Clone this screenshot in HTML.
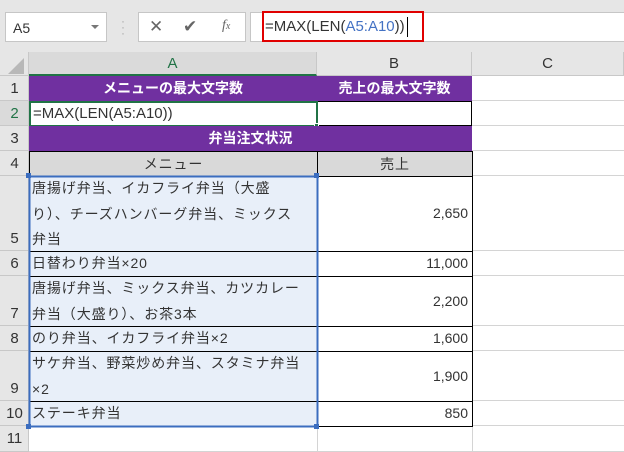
<!DOCTYPE html>
<html><head><meta charset="utf-8"><style>
*{margin:0;padding:0;box-sizing:border-box}
body{width:624px;height:452px;overflow:hidden;background:#e6e6e6;font-family:"Liberation Sans","Noto Sans CJK JP",sans-serif;position:relative;color:#222}
.a{position:absolute}
.box{background:#fff;border:1px solid #c6c6c6}
.ch{background:#e6e6e6;border-right:1px solid #c8c8c8;font-size:15px;text-align:center;line-height:24px;color:#333}
.rh{background:#e6e6e6;border-bottom:1px solid #c8c8c8;width:29px;left:0;text-align:center;font-size:15px;color:#333}
.c{font-size:14px;color:#333;overflow:hidden;white-space:nowrap}
.t{letter-spacing:0.9px}
.p{background:#7030a0;color:#fff;font-weight:bold;text-align:center;font-size:14px}
.hl{background:#dadada}
</style></head><body>
<div class="a box" style="left:5px;top:12px;width:102px;height:30px;font-size:14px;line-height:30px;padding-left:7px;color:#333">A5</div>
<div class="a" style="left:91px;top:25px;width:0;height:0;border-left:4px solid transparent;border-right:4px solid transparent;border-top:4px solid #777"></div>
<div class="a" style="left:121px;top:18px;color:#aaa;font-size:12px;line-height:6px">·<br>·<br>·</div>
<div class="a box" style="left:138px;top:12px;width:108px;height:30px;color:#666">
<span class="a" style="left:10px;top:4px;font-size:17px">✕</span>
<span class="a" style="left:44px;top:4px;font-size:17px">✔</span>
<span class="a" style="left:83px;top:5px;font-size:14px;font-style:italic;font-family:'Liberation Serif',serif">f<span style="font-size:10px">x</span></span>
</div>
<div class="a box" style="left:250px;top:12px;width:380px;height:30px"></div>
<div class="a" style="left:262px;top:11px;width:162px;height:31px;border:2px solid #e00000;font-size:15px;line-height:27px;padding-left:1px;color:#333">=MAX(LEN(<span style="color:#4472c4">A5:A10</span>))<span style="display:inline-block;width:1px;height:20px;background:#000;vertical-align:middle;margin-left:2px"></span></div>
<div class="a" style="left:29px;top:76px;width:595px;height:376px;background:#fff"></div>
<div class="a" style="left:0;top:52px;width:29px;height:24px;background:#e6e6e6;border-right:1px solid #c8c8c8;border-bottom:1px solid #c8c8c8"></div>
<div class="a" style="left:8px;top:58px;width:0;height:0;border-left:16px solid transparent;border-bottom:16px solid #b8b8b8"></div>
<div class="a ch hl" style="left:29px;top:52px;width:288px;height:24px;border-bottom:2px solid #217346;color:#217346">A</div>
<div class="a ch" style="left:317px;top:52px;width:155px;height:24px;border-bottom:1px solid #c8c8c8">B</div>
<div class="a ch" style="left:472px;top:52px;width:152px;height:24px;border-bottom:1px solid #c8c8c8">C</div>
<div class="a rh" style="top:76px;height:25px;line-height:25px">1</div>
<div class="a rh hl" style="top:101px;height:25px;line-height:25px;color:#217346">2</div>
<div class="a rh" style="top:126px;height:25px;line-height:25px">3</div>
<div class="a rh" style="top:151px;height:25px;line-height:25px">4</div>
<div class="a rh" style="top:176px;height:75px;line-height:25px;padding-top:50px">5</div>
<div class="a rh" style="top:251px;height:25px;line-height:25px">6</div>
<div class="a rh" style="top:276px;height:50px;line-height:25px;padding-top:25px">7</div>
<div class="a rh" style="top:326px;height:25px;line-height:25px">8</div>
<div class="a rh" style="top:351px;height:50px;line-height:25px;padding-top:25px">9</div>
<div class="a rh" style="top:401px;height:25px;line-height:25px">10</div>
<div class="a rh" style="top:426px;height:26px;line-height:25px">11</div>
<div class="a" style="left:28px;top:76px;width:1px;height:376px;background:#c8c8c8"></div>
<svg class="a" style="left:0;top:0" width="624" height="452">
<g stroke="#d4d4d4" stroke-width="1">
<line x1="472" y1="100.5" x2="624" y2="100.5"/><line x1="472" y1="125.5" x2="624" y2="125.5"/><line x1="472" y1="150.5" x2="624" y2="150.5"/><line x1="472" y1="175.5" x2="624" y2="175.5"/><line x1="472" y1="250.5" x2="624" y2="250.5"/><line x1="472" y1="275.5" x2="624" y2="275.5"/><line x1="472" y1="325.5" x2="624" y2="325.5"/><line x1="472" y1="350.5" x2="624" y2="350.5"/><line x1="472" y1="400.5" x2="624" y2="400.5"/><line x1="472" y1="425.5" x2="624" y2="425.5"/>
<line x1="29" y1="451.5" x2="624" y2="451.5"/>
<line x1="317.5" y1="426" x2="317.5" y2="452"/><line x1="472.5" y1="426" x2="472.5" y2="452"/>
</g></svg>
<div class="a p" style="left:29px;top:76px;width:288px;height:25px;line-height:25px">メニューの最大文字数</div>
<div class="a p" style="left:317px;top:76px;width:155px;height:25px;line-height:25px">売上の最大文字数</div>
<div class="a c" style="left:29px;top:101px;width:443px;height:25px;background:#fff;border:1px solid #000"></div>
<div class="a c" style="left:29px;top:101px;width:289px;height:26px;border:2px solid #217346;font-size:15px;line-height:21px;padding-left:2px">=MAX(LEN(A5:A10))</div>
<div class="a" style="left:314px;top:123px;width:5px;height:5px;background:#217346;border:1px solid #fff"></div>
<div class="a p" style="left:29px;top:126px;width:443px;height:25px;line-height:25px">弁当注文状況</div>
<div class="a c t" style="left:29px;top:151px;width:289px;height:26px;background:#d9d9d9;border:1px solid #000;text-align:center;line-height:24px">メニュー</div>
<div class="a c t" style="left:317px;top:151px;width:156px;height:26px;background:#d9d9d9;border:1px solid #000;text-align:center;line-height:24px">売上</div>
<div class="a" style="left:29px;top:176px;width:288px;height:250px;background:#e8eff9"></div>
<svg class="a" style="left:0;top:0" width="624" height="452"><g stroke="#000" stroke-width="1">
<line x1="29" y1="251.5" x2="472" y2="251.5"/><line x1="29" y1="276.5" x2="472" y2="276.5"/><line x1="29" y1="326.5" x2="472" y2="326.5"/><line x1="29" y1="351.5" x2="472" y2="351.5"/><line x1="29" y1="401.5" x2="472" y2="401.5"/><line x1="29" y1="426.5" x2="472" y2="426.5"/>
<line x1="472.5" y1="176" x2="472.5" y2="427"/><line x1="317.5" y1="176" x2="317.5" y2="427"/>
</g>
<rect x="29.5" y="176.5" width="288" height="250" fill="none" stroke="#3b6dbf" stroke-width="2"/>
<rect x="26" y="173" width="5" height="5" fill="#3b6dbf"/><rect x="314" y="173" width="5" height="5" fill="#3b6dbf"/><rect x="26" y="424" width="5" height="5" fill="#3b6dbf"/><rect x="314" y="424" width="5" height="5" fill="#3b6dbf"/>
</svg>
<div class="a c t" style="left:32px;top:176px;width:285px;line-height:25.5px">唐揚げ弁当、イカフライ弁当（大盛<br>り）、チーズハンバーグ弁当、ミックス<br>弁当</div>
<div class="a c t" style="left:32px;top:251px;line-height:25px">日替わり弁当×20</div>
<div class="a c t" style="left:32px;top:276px;width:285px;line-height:25.5px">唐揚げ弁当、ミックス弁当、カツカレー<br>弁当（大盛り）、お茶3本</div>
<div class="a c t" style="left:32px;top:326px;line-height:25px">のり弁当、イカフライ弁当×2</div>
<div class="a c t" style="left:32px;top:351px;width:285px;line-height:25.5px">サケ弁当、野菜炒め弁当、スタミナ弁当<br>×2</div>
<div class="a c t" style="left:32px;top:401px;line-height:25px">ステーキ弁当</div>
<div class="a c" style="left:317px;top:176px;width:151px;height:75px;line-height:75px;text-align:right">2,650</div>
<div class="a c" style="left:317px;top:251px;width:151px;line-height:25px;text-align:right">11,000</div>
<div class="a c" style="left:317px;top:276px;width:151px;line-height:25px;text-align:right;padding-top:13px">2,200</div>
<div class="a c" style="left:317px;top:326px;width:151px;line-height:25px;text-align:right">1,600</div>
<div class="a c" style="left:317px;top:351px;width:151px;line-height:25px;text-align:right;padding-top:13px">1,900</div>
<div class="a c" style="left:317px;top:401px;width:151px;line-height:25px;text-align:right">850</div>
</body></html>
